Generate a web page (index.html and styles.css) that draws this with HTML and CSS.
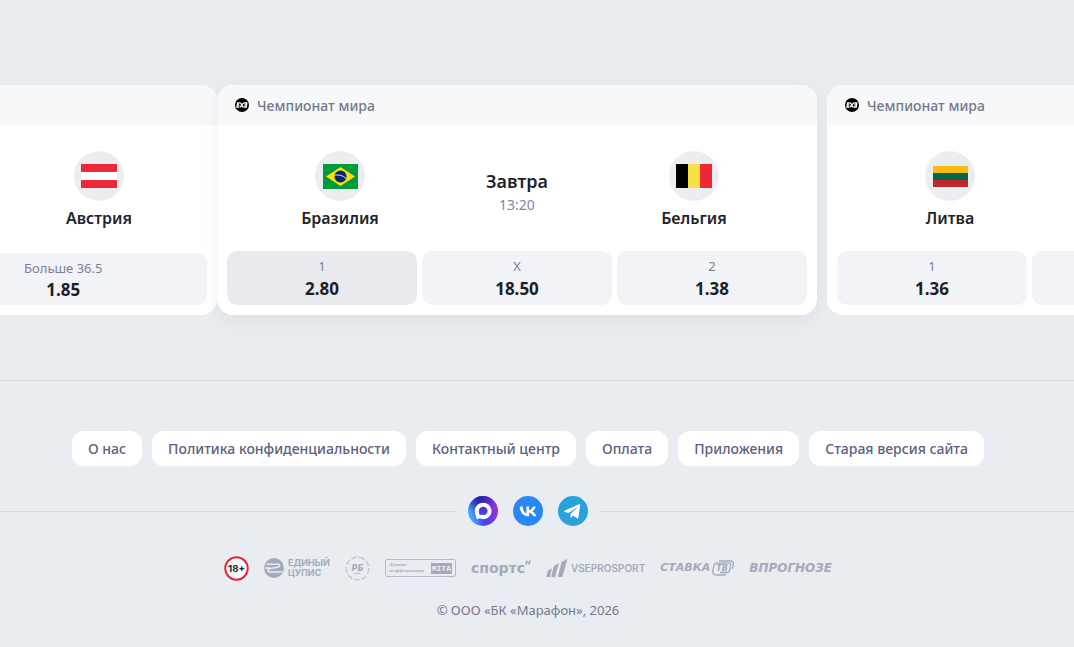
FILE: index.html
```html
<!DOCTYPE html>
<html lang="ru">
<head>
<meta charset="utf-8">
<title>Марафон</title>
<link rel="stylesheet" href="styles.css">
</head>
<body>
<main class="carousel">
  <article class="card">
    <header class="card-head"></header>
    <div class="match match-wide">
      <div class="team"></div>
      <div class="when"></div>
      <div class="team">
        <span class="flag"><svg width="36" height="24" viewBox="0 0 36 24"><path fill="#ed2939" d="M0 0h36v24H0z"/><path fill="#fff" d="M0 8h36v8H0z"/></svg></span>
        <span class="team-name">Австрия</span>
      </div>
    </div>
    <div class="odds odds-short">
      <button class="odd" type="button" aria-label="Меньше"></button>
      <button class="odd" type="button"><span class="odd-label">Больше 36.5</span><span class="odd-value">1.85</span></button>
    </div>
  </article>

  <article class="card card-active">
    <header class="card-head">
      <svg class="league" viewBox="0 0 14 14"><circle cx="7" cy="7" r="7"/><path fill="none" stroke="#fff" stroke-width="1.300" d="M4.800 5H2.600L2 9h2.200M2.300 7h2M5.500 4.600l2.400 4.800M9 4.600 4.800 9.400M9.300 5h2.500l-.6 4H8.500M9.500 7h2"/></svg>
      <span>Чемпионат мира</span>
    </header>
    <div class="match">
      <div class="team">
        <span class="flag"><svg width="35" height="25" viewBox="0 0 35 25"><path fill="#009b3a" d="M0 0h35v25H0z"/><path fill="#fedf00" d="m17.500 3 14.500 9.500L17.500 22 3 12.500z"/><circle cx="17.500" cy="12.500" r="6" fill="#002776"/><path fill="none" stroke="#cfe0e8" d="M11.800 11.200c4-.8 8.500.3 11.300 3.300"/></svg></span>
        <span class="team-name">Бразилия</span>
      </div>
      <div class="when"><span class="day">Завтра</span><time class="time">13:20</time></div>
      <div class="team">
        <span class="flag"><svg width="36" height="24" viewBox="0 0 36 24"><path d="M0 0h12v24H0z"/><path fill="#fae042" d="M12 0h12v24H12z"/><path fill="#ed2939" d="M24 0h12v24H24z"/></svg></span>
        <span class="team-name">Бельгия</span>
      </div>
    </div>
    <div class="odds">
      <button class="odd odd-hover" type="button"><span class="odd-label">1</span><span class="odd-value">2.80</span></button>
      <button class="odd" type="button"><span class="odd-label">X</span><span class="odd-value">18.50</span></button>
      <button class="odd" type="button"><span class="odd-label">2</span><span class="odd-value">1.38</span></button>
    </div>
  </article>

  <article class="card card-next">
    <header class="card-head">
      <svg class="league" viewBox="0 0 14 14"><circle cx="7" cy="7" r="7"/><path fill="none" stroke="#fff" stroke-width="1.300" d="M4.800 5H2.600L2 9h2.200M2.300 7h2M5.500 4.600l2.400 4.800M9 4.600 4.800 9.400M9.300 5h2.500l-.6 4H8.500M9.500 7h2"/></svg>
      <span>Чемпионат мира</span>
    </header>
    <div class="match">
      <div class="team">
        <span class="flag"><svg width="35" height="21" viewBox="0 0 35 21"><path fill="#fdb913" d="M0 0h35v7H0z"/><path fill="#006a44" d="M0 7h35v7H0z"/><path fill="#c1272d" d="M0 14h35v7H0z"/></svg></span>
        <span class="team-name">Литва</span>
      </div>
      <div class="when"></div>
      <div class="team"></div>
    </div>
    <div class="odds">
      <button class="odd" type="button"><span class="odd-label">1</span><span class="odd-value">1.36</span></button>
      <button class="odd" type="button" aria-label="X"></button>
      <button class="odd" type="button" aria-label="2"></button>
    </div>
  </article>
</main>

<footer class="footer">
  <nav class="links">
    <a href="#">О нас</a>
    <a href="#">Политика конфиденциальности</a>
    <a href="#">Контактный центр</a>
    <a href="#">Оплата</a>
    <a href="#">Приложения</a>
    <a href="#">Старая версия сайта</a>
  </nav>

  <div class="social-row">
    <div class="social">
      <a href="#" aria-label="MAX"><svg viewBox="0 0 30 30">
        <defs>
          <linearGradient id="mx" x1="0" y1=".7" x2="1" y2=".4"><stop offset="0" stop-color="#44c4ff"/><stop offset=".45" stop-color="#4343ee"/><stop offset="1" stop-color="#9933dd"/></linearGradient>
          <radialGradient id="mt" cx=".4" cy="0" r=".6"><stop offset="0" stop-color="#25209a"/><stop offset="1" stop-color="#25209a" stop-opacity="0"/></radialGradient>
        </defs>
        <circle cx="15" cy="15" r="15" fill="url(#mx)"/><circle cx="15" cy="15" r="15" fill="url(#mt)"/>
        <path fill="#fff" fill-rule="evenodd" d="M15.300 6.700c4.600 0 8.200 3.700 8.200 8.300s-3.700 8.200-8.200 8.200c-1.500 0-2.400-.3-3.600-1.100-.9 1.100-3.100 1.500-3.200.3 0-2.100-1.700-3.900-1.700-7.500 0-4.700 3.800-8.200 8.500-8.200zm.1 4c-2.700 0-4.600 2.100-4.600 4.500 0 1.700.6 3.800 1.300 4 .3.100.8-.4 1.200-.7.700.4 1.300.6 2 .6 2.400 0 4.300-1.800 4.300-4.200s-1.900-4.200-4.200-4.200z"/>
      </svg></a>
      <a href="#" aria-label="ВКонтакте"><svg viewBox="0 0 30 30"><circle cx="15" cy="15" r="15" fill="#2787f5"/><path fill="#fff" d="M15.700 20.300C10.200 20.300 6.900 16.600 6.800 10.400h2.900c.1 4.500 2.100 6.500 3.700 6.900v-6.900h2.700v3.900c1.600-.2 3.300-2 3.900-3.900h2.700c-.4 2.300-2.100 4.200-3.400 4.900 1.300.6 3.200 2.100 4 5h-3c-.6-1.800-2.200-3.300-4.200-3.500v3.500z"/></svg></a>
      <a href="#" aria-label="Telegram"><svg viewBox="0 0 30 30"><circle cx="15" cy="15" r="15" fill="#2ba1dc"/><path fill="#fff" d="M22.300 8.800c.1-.8-.7-.8-1.300-.5L7 14.500c-1.300.6-.8 1.200 0 1.500l3.500 1.100 8.100-5.300c.5-.3.700-.1.400.2l-6.500 5.900v3.900c.5 0 .8-.2 1.100-.5l1.700-1.700 3.600 2.700c.7.4 1.200.2 1.400-.6z"/></svg></a>
    </div>
  </div>

  <div class="partners">
    <svg class="age" width="25" height="25" viewBox="0 0 26 26"><circle cx="13" cy="13" r="11.700" fill="#fafbfc" stroke="#e32636" stroke-width="2"/><text x="13" y="16.500" text-anchor="middle" class="t-age">18+</text></svg>

    <a href="#" class="cupis"><svg width="20" height="20" viewBox="0 0 21 21"><circle cx="10.500" cy="10.500" r="10.500" fill="#a3aabb"/><path fill="none" stroke="#eaeef2" stroke-width="1.600" d="M2.500 6.500h12.300c2 0 1.600 3-.3 3.300l-8.600 1.200c-2 .4-2.300 3.700 0 3.700h13.600M1 10.500h5"/></svg><span>ЕДИНЫЙ<br>ЦУПИС</span></a>

    <a href="#" aria-label="РБ"><svg width="25" height="25" viewBox="0 0 25 25"><g fill="none" stroke="#b3b9c7"><circle cx="12.500" cy="12.500" r="11.300" stroke-width="1.600" stroke-dasharray="1.100 .8 1.600 .8 1.100 2.400"/><path d="M8.500 17.500h7" stroke-width=".8"/></g><text x="12.500" y="15" text-anchor="middle" class="t-rb">РБ</text></svg></a>

    <a href="#" class="mita"><span class="mita-text">Лучшие<br>коэффициенты</span><b>MITA</b></a>

    <a href="#" class="sports">спортс<svg width="6" height="6" viewBox="0 0 8 6"><path fill="#a3aabb" d="M1 0h3L2.500 5H.500zM5 0h3L6 5H4z"/></svg></a>

    <a href="#" class="vse"><svg width="22" height="18" viewBox="0 0 22 18"><path fill="#a3aabb" d="m2 11.500 4-2L3.800 18H0zM8 7l5-3-4 14H5zM15.500 3l6-3-5.200 18h-4.500z"/></svg><span>VSEPROSPORT</span></a>

    <a href="#" class="stavka"><span>СТАВКА</span><svg width="22" height="16" viewBox="0 0 22 16"><path fill="none" stroke="#a3aabb" stroke-width="1.300" d="M7 1h10.500c3.500 0 4.300 1.500 3.500 5l-.7 3M14 15H5c-3.500 0-4.700-1.500-4-5l.9-4.500C2.200 4 2.900 3.200 4.200 3.200H17c1.300 0 1.900.6 1.600 1.900l-1 5c-.3 1.500-1 2.400-2.500 2.400H8"/><text x="10" y="10.800" text-anchor="middle" class="t-tv">ТВ</text></svg></a>

    <a href="#" class="prognoze">ВПРОГНОЗЕ</a>
  </div>

  <p class="copyright">© ООО «БК «Марафон», 2026</p>
</footer>
</body>
</html>
```
FILE: styles.css
```css
* { box-sizing: border-box; }

body {
  margin: 0;
  overflow-x: hidden;
  background: #e9edf1;
  color: #222429;
  font-family: "Noto Sans", sans-serif;
}

a { color: inherit; text-decoration: none; }
svg { display: block; flex: none; }

/* Match carousel */
.carousel {
  display: flex;
  justify-content: center;
  overflow: hidden;
  padding: 85px 30px 65px 0;
  border-bottom: 1px solid #d5dae0;
}

.card {
  flex: 0 0 600px;
  display: flex;
  flex-direction: column;
  overflow: hidden;
  border-radius: 16px;
  background: #fff;
}
.card-active { box-shadow: 0 5px 18px rgba(30, 35, 50, .06); }
.card-next { margin-left: 10px; }

.card-head {
  display: flex;
  align-items: center;
  gap: 8px;
  height: 40px;
  padding: 0 18px;
  background: #f6f8fa;
  color: #74788f;
  font-size: 14px;
  font-weight: 500;
}
.league { width: 14px; height: 14px; }

.match {
  flex: 1;
  display: grid;
  grid-template-columns: 1fr 128px 1fr;
  padding: 26px 10px 21px;
}
.match-wide { grid-template-columns: 1fr 148px 1fr; }

.team {
  display: flex;
  flex-direction: column;
  align-items: center;
  gap: 5px;
}
.flag {
  display: flex;
  align-items: center;
  justify-content: center;
  width: 50px;
  height: 50px;
  border-radius: 50%;
  background: #ebeef1;
}
.team-name { font-size: 16px; font-weight: 600; line-height: 24px; }

.when {
  display: flex;
  flex-direction: column;
  align-items: center;
  padding-top: 16px;
}
.day { font-size: 18px; font-weight: 600; line-height: 28px; }
.time { color: #8386a0; font-size: 14px; line-height: 20px; }

.odds {
  display: flex;
  gap: 5px;
  height: 64px;
  padding: 0 10px 10px;
}
.odds-short { height: 62px; }
.odd {
  flex: 1;
  display: flex;
  flex-direction: column;
  align-items: center;
  justify-content: center;
  padding: 0;
  border: 0;
  border-radius: 10px;
  background: #f2f3f7;
  color: #1d1f26;
  font-family: inherit;
}
.odd-hover { background: #e9eaed; }
.odd-label { color: #7c8095; font-size: 13px; line-height: 22px; }
.odd-value { font-size: 17px; font-weight: 700; line-height: 24px; }
.odds-short .odd { padding-top: 2px; }
.odds-short .odd-label { line-height: 20px; }

/* Footer */
.footer {
  display: flex;
  flex-direction: column;
  align-items: center;
  padding: 50px 0 26px;
}

.links {
  display: flex;
  flex-wrap: wrap;
  justify-content: center;
  gap: 10px;
  padding-right: 18px;
}
.links a {
  padding: 1px 16px 0;
  border-radius: 12px;
  background: #fff;
  color: #5c6080;
  font-size: 14px;
  font-weight: 500;
  line-height: 34px;
}

.social-row {
  align-self: stretch;
  display: flex;
  align-items: center;
  gap: 12px;
  padding-top: 30px;
}
.social-row::before,
.social-row::after {
  content: "";
  flex: 1;
  height: 1px;
  background: #d5dae0;
}
.social-row::after { flex: 1 0 18px; }
.social { display: flex; gap: 15px; }
.social svg { width: 30px; height: 30px; }

.partners {
  display: flex;
  align-items: center;
  gap: 15px;
  height: 26px;
  margin-top: 29px;
  padding-right: 18px;
  color: #a3aabb;
}
.partners a { display: flex; align-items: center; }
.t-age { font: 700 10px Inter, sans-serif; fill: #222429; }
.t-rb { font: italic 700 8px "DejaVu Sans", sans-serif; fill: #a3aabb; }
.t-tv { font: italic 700 8px "DejaVu Sans", sans-serif; fill: #a3aabb; }

.cupis {
  gap: 4px;
  font: 700 9px/10px Inter, sans-serif;
}
.mita {
  justify-content: space-between;
  width: 71px;
  height: 18px;
  padding: 0 3px;
  border: 1px solid #b3b9c7;
  border-radius: 2px;
}
.mita-text { font: italic 700 5px/6px "Liberation Serif", serif; }
.mita b {
  padding: 0 1px;
  background: #a3aabb;
  color: #eaeef2;
  font: 700 8px/11px "Liberation Mono", monospace;
}
.sports { font: 700 14px/16px "DejaVu Sans", sans-serif; }
.sports svg { align-self: flex-start; }
.vse { gap: 3px; font: 600 10px/18px Inter, sans-serif; }
.stavka { gap: 2px; font: italic 700 11px/16px "DejaVu Sans", sans-serif; }
.prognoze { font: italic 700 12px/16px "DejaVu Sans", sans-serif; }

.copyright {
  margin: 18px 0 0;
  padding-right: 18px;
  color: #74788f;
  font-size: 13px;
  line-height: 22px;
}
```
